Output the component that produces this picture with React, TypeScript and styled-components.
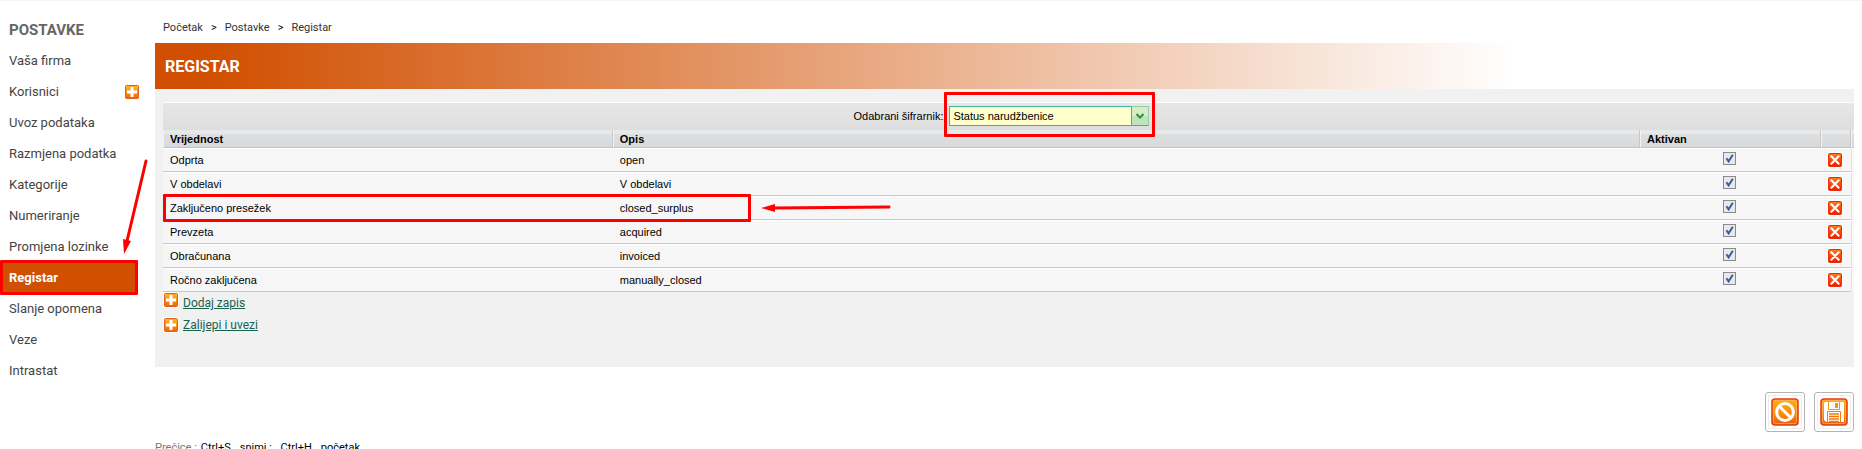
import React, { useState } from 'react';
import styled, { createGlobalStyle, css } from 'styled-components';

const Global = createGlobalStyle`
  * { box-sizing: border-box; }
  html { scrollbar-width: none; }
  body {
    margin: 0;
    background: #fff;
    color: #000;
    font-family: Roboto, "Liberation Sans", sans-serif;
    font-size: 11px;
  }
`;

const Page = styled.div`
  display: flex;
  gap: 15px;
  padding: 0 8px 16px 0;
  border-top: 1px solid #f5f5f5;
`;

const Sidebar = styled.nav`
  flex: 0 0 140px;
  padding-top: 13px;
`;

const SidebarTitle = styled.h2`
  margin: 0;
  padding: 1px 0 0 9px;
  height: 31px;
  font-size: 15px;
  font-weight: 700;
  line-height: 31px;
  color: #666;
`;

const MenuList = styled.ul`
  margin: 0;
  padding: 0;
  list-style: none;
`;

const MenuItem = styled.li<{ $active?: boolean }>`
  position: relative;
  display: flex;
  align-items: center;
  justify-content: space-between;
  height: 31px;
  margin-right: ${(p) => (p.$active ? '2px' : '0')};
  background: ${(p) => (p.$active ? '#d14f00' : 'transparent')};
`;

const MenuLink = styled.a<{ $active?: boolean }>`
  padding-left: 9px;
  font-size: 13px;
  font-weight: ${(p) => (p.$active ? 700 : 400)};
  color: ${(p) => (p.$active ? '#fff' : '#444')};
  text-decoration: none;
`;

const IconButton = styled.button`
  display: inline-flex;
  vertical-align: middle;
  padding: 0;
  border: 0;
  background: none;
  cursor: pointer;
`;

const Main = styled.main`
  flex: 1;
  min-width: 0;
`;

const Breadcrumb = styled.nav`
  display: flex;
  gap: 8px;
  height: 42px;
  padding: 0 8px;
  line-height: 54px;
`;

const Crumb = styled.a`
  color: #333;
  text-decoration: none;
`;

const TitleBar = styled.h1`
  height: 46px;
  margin: 0;
  padding-left: 10px;
  line-height: 48px;
  font-size: 16px;
  font-weight: 700;
  color: #fff;
  background: linear-gradient(90deg, #d14f00 0%, #d14f00 3%, #fff 80%);
`;

const Panel = styled.section`
  padding: 13px 0 33px 8px;
  background: #f1f1f1;
`;

const Toolbar = styled.div`
  display: flex;
  align-items: center;
  justify-content: center;
  gap: 6px;
  height: 28px;
  padding: 0 14px 1px 0;
  border-top: 1px solid #fff;
  background: linear-gradient(#e7e7e7, #dedede);
  font-family: "Liberation Sans", Arial, sans-serif;
`;

const SelectWrap = styled.div`
  position: relative;
  display: flex;
`;

const Select = styled.select`
  width: 200px;
  height: 20px;
  padding: 0 20px 0 3px;
  border: 1px solid #3fb39b;
  border-radius: 0;
  appearance: none;
  background: #ffffcc;
  color: #000;
  font: 11px "Liberation Sans", Arial, sans-serif;
`;

const SelectTrigger = styled.span`
  position: absolute;
  top: 0;
  right: 0;
  bottom: 0;
  display: flex;
  align-items: center;
  justify-content: center;
  width: 18px;
  border: 1px solid #8fcfa8;
  border-bottom-color: #3fb39b;
  border-left-color: #3fb39b;
  background: linear-gradient(#d8ecc8 50%, #bfe3bd 50%);
  pointer-events: none;
`;

const Table = styled.table`
  width: 100%;
  table-layout: fixed;
  border-collapse: separate;
  border-spacing: 0;
  font-family: "Liberation Sans", Arial, sans-serif;
`;

const Col = styled.col<{ $width?: string }>`
  width: ${(p) => p.$width ?? 'auto'};
`;

const HeadCell = styled.th`
  height: 18px;
  padding: 0 0 0 6px;
  border-bottom: 1px solid #bfc1c3;
  border-left: 1px solid #f3f3f3;
  border-right: 1px solid #c8c8c8;
  background: linear-gradient(#e7e8e9 0 22%, #dddfe1 23%, #d7d9db);
  text-align: left;
  line-height: 16px;
  &:last-child { border-right: 0; padding: 0; }
`;

const Cell = styled.td<{ $center?: boolean; $gutter?: boolean }>`
  position: relative;
  height: 24px;
  padding: 0 0 0 7px;
  border-top: 1px solid #fff;
  border-bottom: 1px solid ${(p) => (p.$gutter ? '#f6f6f6' : '#c8c8c8')};
  background: #f6f6f6;
  line-height: 20px;
  ${(p) => p.$center && css`padding: 0 2px 0 0; text-align: center;`}
  ${(p) => p.$gutter && css`padding: 0; border-left: 1px solid #e4e4e4;`}
`;

const Check = styled.input`
  display: block;
  width: 13px;
  height: 13px;
  margin: 0 auto 3px;
  border: 1px solid #8a8a8a;
  appearance: none;
  outline: 0;
  background: #ececec;
  &:checked {
    background: #e6e8ec url("data:image/svg+xml,%3Csvg xmlns='http://www.w3.org/2000/svg' viewBox='0 0 11 11'%3E%3Cpath d='M2.5 5.2 4.6 8.4 8.8 1.8' fill='none' stroke='%23425a9c' stroke-width='2'/%3E%3C/svg%3E") center / 11px 11px no-repeat;
  }
`;

const DeleteButton = styled(IconButton)`
  display: flex;
  margin: 0 auto;
`;

const Actions = styled.div`
  display: flex;
  flex-direction: column;
  align-items: flex-start;
  gap: 5px;
`;

const ActionRow = styled.div`
  display: flex;
  gap: 4px;
`;

const ActionLink = styled.a<{ $low?: boolean }>`
  padding-top: ${(p) => (p.$low ? '3px' : '0')};
  font-size: 12px;
  line-height: 17px;
  color: #16624f;
`;

const FormButtons = styled.div`
  display: flex;
  justify-content: flex-end;
  gap: 9px;
  padding-top: 25px;
`;

const FormButton = styled.button`
  display: flex;
  align-items: center;
  justify-content: center;
  width: 40px;
  height: 40px;
  padding: 0;
  border: 1px solid #b4b4b4;
  border-radius: 3px;
  background: #fff;
  box-shadow: inset 0 0 0 2px #fff, inset 0 0 0 3px #ececec;
  cursor: pointer;
`;

const Shortcuts = styled.div`
  display: flex;
  gap: 4px;
  margin-top: 8px;
  line-height: 16px;
  color: #777;
`;

const ShortcutKeys = styled.div`
  display: flex;
  gap: 9px;
  color: #000;
`;

const Marker = styled.span`
  position: absolute;
  z-index: 2;
  border: 3px solid #f00;
  border-radius: 1px;
  pointer-events: none;
`;

const MenuMarker = styled(Marker)`
  inset: -2px 0 -2px 0;
`;

const SelectMarker = styled(Marker)`
  inset: -14px -6px -11px -5px;
`;

const RowMarker = styled(Marker)`
  top: -3px;
  left: 0;
  width: calc(100% + 138px);
  height: 28px;
`;

const MenuArrow = styled.svg`
  position: absolute;
  z-index: 2;
  right: -11px;
  bottom: 38px;
  pointer-events: none;
`;

const RowArrow = styled.svg`
  position: absolute;
  z-index: 2;
  top: 5px;
  left: 147px;
  pointer-events: none;
`;

const PlusIcon = () => (
  <svg width="16" height="16" viewBox="0 0 16 16" aria-hidden="true">
    <defs>
      <linearGradient id="plusFill" x1="0" y1="0" x2="0" y2="1">
        <stop offset="0" stopColor="#ffb52a" />
        <stop offset="0.5" stopColor="#fb9311" />
        <stop offset="1" stopColor="#ee6206" />
      </linearGradient>
    </defs>
    <rect width="16" height="16" fill="#fff" />
    <rect x="1.5" y="1.5" width="13" height="13" rx="1" fill="url(#plusFill)" stroke="#e0621c" />
    <path d="M8 3v10M3 8h10" stroke="#fff" strokeWidth="3" />
  </svg>
);

const DeleteIcon = () => (
  <svg width="16" height="16" viewBox="0 0 16 16" aria-hidden="true">
    <defs>
      <linearGradient id="deleteFill" x1="0" y1="0" x2="0" y2="1">
        <stop offset="0" stopColor="#ff7a1c" />
        <stop offset="1" stopColor="#f01c00" />
      </linearGradient>
    </defs>
    <rect width="16" height="16" fill="#fff" />
    <rect x="1.5" y="1.5" width="13" height="13" rx="1" fill="url(#deleteFill)" stroke="#ec2c0c" />
    <path d="M4.3 4.3l7.4 7.4M11.7 4.3l-7.4 7.4" stroke="#fff" strokeWidth="2" strokeLinecap="round" />
  </svg>
);

const BigFill = ({ id }: { id: string }) => (
  <>
    <defs>
      <linearGradient id={id} x1="0" y1="0" x2="0" y2="1">
        <stop offset="0" stopColor="#ffb010" />
        <stop offset="0.6" stopColor="#f98a0c" />
        <stop offset="1" stopColor="#e8590a" />
      </linearGradient>
    </defs>
    <rect x="1" y="1" width="26" height="26" rx="3" fill={`url(#${id})`} stroke="#e0400e" strokeWidth="1.6" />
    <rect x="2.4" y="2.4" width="23.2" height="23.2" rx="2" fill="none" stroke="#ffb060" strokeWidth="0.8" />
  </>
);

const CancelIcon = () => (
  <svg width="28" height="28" viewBox="0 0 28 28" aria-hidden="true">
    <BigFill id="cancelFill" />
    <circle cx="14" cy="14" r="8.4" fill="none" stroke="#fff" strokeWidth="3" />
    <path d="M8.5 8.5l11 11" stroke="#fff" strokeWidth="3" />
  </svg>
);

const SaveIcon = () => (
  <svg width="28" height="28" viewBox="0 0 28 28" aria-hidden="true">
    <BigFill id="saveFill" />
    <path d="M5 4h18l1 1v19H6l-2-2V5z" fill="#fff" />
    <path d="M8.5 4v7.5h11V4" fill="none" stroke="#f9901a" />
    <path d="M15 5h3v5h-3z" fill="#f9901a" />
    <path d="M7.5 24V13.5h13V24" fill="none" stroke="#f4780c" />
    <path d="M9 16h10M9 18.5h10M9 21h10M9 23.5h10" stroke="#f4780c" strokeWidth="1.4" />
  </svg>
);

const menu = [
  'Vaša firma',
  'Korisnici',
  'Uvoz podataka',
  'Razmjena podatka',
  'Kategorije',
  'Numeriranje',
  'Promjena lozinke',
  'Registar',
  'Slanje opomena',
  'Veze',
  'Intrastat',
];

const records = [
  { value: 'Odprta', description: 'open' },
  { value: 'V obdelavi', description: 'V obdelavi' },
  { value: 'Zaključeno presežek', description: 'closed_surplus', marked: true },
  { value: 'Prevzeta', description: 'acquired' },
  { value: 'Obračunana', description: 'invoiced' },
  { value: 'Ročno zaključena', description: 'manually_closed' },
];

export default function App() {
  const [active, setActive] = useState(records.map(() => true));
  const toggle = (index: number) =>
    setActive((list) => list.map((on, i) => (i === index ? !on : on)));

  return (
    <>
      <Global />
      <Page>
        <Sidebar aria-label="Postavke">
          <SidebarTitle>POSTAVKE</SidebarTitle>
          <MenuList>
            {menu.map((name) => {
              const current = name === 'Registar';
              return (
                <MenuItem key={name} $active={current}>
                  <MenuLink href="#" $active={current}>{name}</MenuLink>
                  {name === 'Korisnici' && (
                    <IconButton type="button" aria-label="Dodaj korisnika"><PlusIcon /></IconButton>
                  )}
                  {current && (
                    <>
                      <MenuMarker />
                      <MenuArrow width="28" height="98" viewBox="0 0 28 98" aria-hidden="true">
                        <path d="M25 4 6 84" stroke="#f00" strokeWidth="3" strokeLinecap="round" />
                        <path d="M3 97 2 82 10 84z" fill="#f00" />
                      </MenuArrow>
                    </>
                  )}
                </MenuItem>
              );
            })}
          </MenuList>
        </Sidebar>

        <Main>
          <Breadcrumb aria-label="Putanja">
            <Crumb href="#">Početak</Crumb>
            <span>&gt;</span>
            <Crumb href="#">Postavke</Crumb>
            <span>&gt;</span>
            <Crumb href="#">Registar</Crumb>
          </Breadcrumb>
          <TitleBar>REGISTAR</TitleBar>
          <Panel>
            <Toolbar>
              <label htmlFor="codebook">Odabrani šifrarnik:</label>
              <SelectWrap>
                <Select id="codebook" defaultValue="status">
                  <option value="status">Status narudžbenice</option>
                </Select>
                <SelectTrigger>
                  <svg width="10" height="6" viewBox="0 0 10 6" aria-hidden="true">
                    <path d="M1.5 1 5 4.5 8.5 1" fill="none" stroke="#2f8f3c" strokeWidth="2" />
                  </svg>
                </SelectTrigger>
                <SelectMarker />
              </SelectWrap>
            </Toolbar>
            <Table>
              <colgroup>
                <Col $width="26.6%" />
                <Col />
                <Col $width="181px" />
                <Col $width="30px" />
                <Col $width="3px" />
              </colgroup>
              <thead>
                <tr>
                  <HeadCell>Vrijednost</HeadCell>
                  <HeadCell>Opis</HeadCell>
                  <HeadCell>Aktivan</HeadCell>
                  <HeadCell aria-label="Brisanje" />
                  <HeadCell aria-hidden="true" />
                </tr>
              </thead>
              <tbody>
                {records.map((record, index) => (
                  <tr key={record.value}>
                    <Cell>
                      {record.value}
                      {record.marked && <RowMarker />}
                    </Cell>
                    <Cell>
                      {record.description}
                      {record.marked && (
                        <RowArrow width="132" height="10" viewBox="0 0 132 10" aria-hidden="true">
                          <path d="M14 6 129 5" stroke="#f00" strokeWidth="3" strokeLinecap="round" />
                          <path d="M1 6 15 2V10z" fill="#f00" />
                        </RowArrow>
                      )}
                    </Cell>
                    <Cell $center>
                      <Check
                        type="checkbox"
                        aria-label={`Aktivan: ${record.value}`}
                        checked={active[index]}
                        onChange={() => toggle(index)}
                      />
                    </Cell>
                    <Cell $center>
                      <DeleteButton type="button" aria-label={`Obriši: ${record.value}`}><DeleteIcon /></DeleteButton>
                    </Cell>
                    <Cell $gutter />
                  </tr>
                ))}
              </tbody>
            </Table>
            <Actions>
              <ActionRow>
                <PlusIcon />
                <ActionLink href="#" $low>Dodaj zapis</ActionLink>
              </ActionRow>
              <ActionRow>
                <PlusIcon />
                <ActionLink href="#">Zalijepi i uvezi</ActionLink>
              </ActionRow>
            </Actions>
          </Panel>
          <FormButtons>
            <FormButton type="button" aria-label="Odustani"><CancelIcon /></FormButton>
            <FormButton type="button" aria-label="Snimi"><SaveIcon /></FormButton>
          </FormButtons>
          <Shortcuts>
            <span>Prečice :</span>
            <ShortcutKeys>
              <span>Ctrl+S</span>
              <span>snimi ;</span>
              <span>Ctrl+H</span>
              <span>početak</span>
            </ShortcutKeys>
          </Shortcuts>
        </Main>
      </Page>
    </>
  );
}
